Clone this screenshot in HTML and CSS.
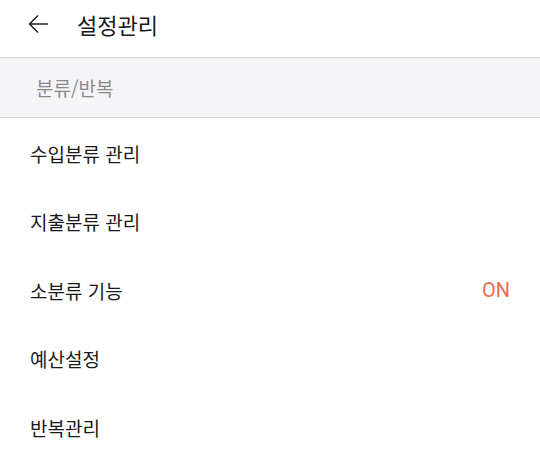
FILE: index.html
```html
<!DOCTYPE html>
<html lang="ko">
<head>
<meta charset="utf-8">
<link rel="stylesheet" href="styles.css">
</head>
<body>
<div class="app">
  <header class="topbar">
    <svg class="back" width="22" height="22" viewBox="0 0 22 22"><path d="M21 11H2.5M11 2.5L2.5 11L11 19.5" fill="none" stroke="#222" stroke-width="1.5"/></svg>
    <h1 class="title">설정관리</h1>
  </header>
  <div class="section">분류/반복</div>
  <ul class="list">
    <li class="item"><span>수입분류 관리</span></li>
    <li class="item"><span>지출분류 관리</span></li>
    <li class="item"><span>소분류 기능</span><span class="on">ON</span></li>
    <li class="item"><span>예산설정</span></li>
    <li class="item"><span>반복관리</span></li>
  </ul>
</div>
</body>
</html>
```
FILE: styles.css
```css
* { box-sizing: border-box; }
body {
  margin: 0;
  background: #fff;
  font-family: "Noto Sans CJK KR", "Noto Sans", sans-serif;
  color: #1a1a1a;
}
.topbar {
  height: 58px;
  display: flex;
  align-items: center;
  padding-left: 27px;
  border-bottom: 1px solid #d6d6d8;
}
.back { display: block; margin-right: 28px; margin-top: -9px; }
.title {
  margin: 0;
  font-size: 22px;
  font-weight: 400;
  margin-top: -10px;
}
.section {
  height: 60px;
  background: #f5f5f7;
  border-bottom: 1px solid #d6d6d8;
  display: flex;
  align-items: center;
  padding-left: 36px;
  font-size: 19px;
  color: #8a8a8e;
}
.list { list-style: none; margin: 0; padding: 0 30px; }
.item {
  height: 68.5px;
  display: flex;
  align-items: center;
  justify-content: space-between;
  font-size: 19px;
  padding-top: 2px;
}
.on { color: #e96b50; font-size: 20px; font-weight: 400; font-family: "Roboto", sans-serif; }
```
